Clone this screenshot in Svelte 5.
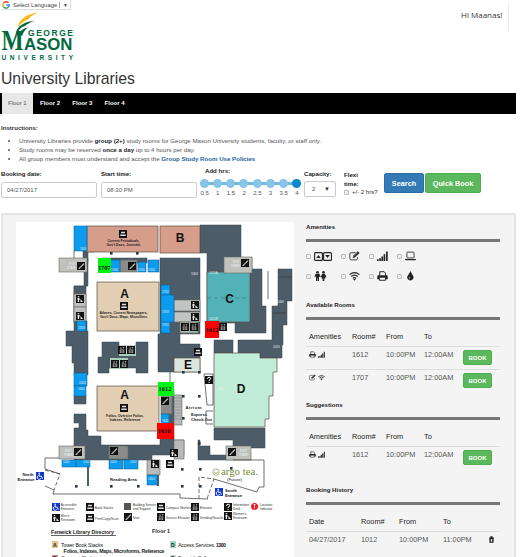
<script>
  const floors = ['Floor 1', 'Floor 2', 'Floor 3', 'Floor 4'];
  const hours = ['0.5', '1', '1.5', '2', '2.5', '3', '3.5', '4'];
  const amenityRows = [
    ['elevator', 'edit', 'signal', 'laptop'],
    ['people', 'wifi', 'print', 'drop']
  ];
  const available = [
    { icons: ['print', 'signal'], room: '1612', from: '10:00PM', to: '12:00AM' },
    { icons: ['edit', 'wifi'], room: '1707', from: '10:00PM', to: '12:00AM' }
  ];
  const suggestions = [{ icons: ['print', 'signal'], room: '1612', from: '10:00PM', to: '12:00AM' }];

  const slate = [
    'M74 286H84V258H88V286H84V323H74Z',
    'M74 286H86V321H87V331H88V375H74V363H72V346H66V331H74Z',
    'M74 395H86V404H74Z',
    'M74 414H86V430H88V436H101V445H160V438H163V390H174V440H184V455H152V460H74V428H79V423H74Z',
    'M102 342H119V346H136V342H148V373H136V368H109V373H98V357H102Z',
    'M102 258H147V263H102Z',
    'M160 258H200V334H180V344H200V372H158V334H160Z',
    'M200 225H241V258H252V269H262V306H266V333H235V323H207V253H200Z',
    'M278 269H292V301H287V325H283V345H282V358H260V353H238V340H272V306H278Z',
    'M214 340H233V353H214Z',
    'M214 428H265V448H233V440H214Z',
    'M198 440H200V446H210V455H233V460H198Z',
    'M83 248H94V252H88V263H83Z'
  ];
  const blues = [
    [74, 226, 13, 25], [77, 321, 9, 10], [74, 373, 13, 13], [74, 386, 12, 10],
    [110, 260, 10, 12], [138, 262, 8, 10], [148, 260, 11, 12],
    [161, 285, 9, 48], [161, 295, 13, 27], [161, 414, 8, 10],
    [62, 460, 14, 7], [76, 460, 14, 7], [109, 460, 14, 9], [124, 460, 14, 9], [147, 475, 11, 10]
  ];
  const grays = [
    [59, 258, 28, 14, '#c0c0bd'], [120, 260, 17, 12, '#8b8b89'], [74, 294, 12, 13, '#bfc0c0'],
    [74, 307, 12, 14, '#bfc0c0'], [174, 300, 26, 11, '#c2c3c3'], [174, 312, 26, 10, '#c2c3c3'],
    [180, 322, 18, 11, '#a7b9ac'], [224, 257, 28, 16, '#c0c0bd'], [59, 446, 26, 13, '#c0c0bd'],
    [109, 446, 19, 13, '#8b8b89'], [161, 395, 11, 19, '#8b8b89'], [174, 395, 8, 30, '#b5b6b8'],
    [174, 440, 10, 19, '#b8b9ba'], [226, 446, 25, 14, '#c0c0bd'], [147, 460, 13, 15, '#b8b9ba']
  ];
  const blacks = [
    [119, 230, 'b'], [77, 262, 's'], [128, 262, 's'], [76, 295, 'p'], [76, 312, 'p'],
    [120, 302, 'b'], [191, 301, 'p'], [191, 313, 'p'], [181, 323, 'e'], [190, 323, 'e'],
    [219, 323, 'e'], [241, 259, 's'], [118, 346, 'e'], [127, 346, 'e'], [111, 360, 'e'],
    [120, 360, 'e'], [194, 348, 'b'], [205, 376, 'q'], [161, 397, 's'], [170, 449, 'p'],
    [151, 460, 'p'], [166, 460, 'b'], [120, 404, 'b'], [74, 448, 's'], [110, 447, 's'], [228, 448, 's']
  ];
  const dots = [[75, 485], [110, 485], [137, 485], [181, 485], [199, 485], [181, 468], [199, 468],
    [230, 467], [182, 395], [198, 395], [182, 417], [110, 252], [136, 252], [182, 371], [198, 371], [198, 442]];
  const legend = [
    [52, 503, 'Accessible', 'Entrance', 'a'], [86, 503, 'Book Stacks', '', 'b'], [124, 503, 'Building Service', 'and Support', 'g'],
    [157, 503, 'Compact Shelving', '', 'b'], [191, 503, 'Elevator', '', 'e'], [224, 503, 'Information', 'Desk', 'q'],
    [251, 503, 'Location', 'Indicator', 'r'], [52, 514, "Men's", 'Restroom', 'p'], [86, 514, 'Print/Copy/Scan', '', 'b'],
    [124, 513, 'Stair', '', 's'], [157, 513, 'Service Elevator', '', 'e'], [191, 513, 'Vending/Snacks', '', 'e'], [224, 512, "Women's", 'Restroom', 'p']
  ];
  const blueLabels = [[80, 250, '1101'], [78, 329, '1319'], [79, 384, '1003'], [78, 390, '1005'], [111, 271, '1706'], [138, 271, '1705'],
    [148, 271, '1704'], [162, 293, '1702'], [162, 313, '1703'], [162, 326, '1701'], [162, 422, '1611'], [63, 463, '1201'], [83, 463, '1202'], [110, 463, '1203'], [130, 463, '1202'],
    [148, 480, '1204'], [191, 275, '1003'], [209, 274, '1010A'], [209, 320, '1010B'], [277, 303, '1009'], [217, 390, '1300'], [273, 348, '1020']];
</script>

{#snippet icon(name)}
  <svg class="icon {name}" viewBox={name === 'elevator' ? '0 0 36 18' : name === 'people' ? '0 0 24 20' : '0 0 20 18'}>
    {#if name === 'elevator'}
      <rect x="1.2" y="1.2" width="15.6" height="15.6" rx="2" fill="none" stroke="currentColor" stroke-width="2.3" />
      <rect x="19.2" y="1.2" width="15.6" height="15.6" rx="2" fill="none" stroke="currentColor" stroke-width="2.3" />
      <path d="M4.500 12L9 6l4.500 6zM22.500 6L27 12l4.500-6z" fill="currentColor" />
    {:else if name === 'edit'}
      <path d="M12 3H4Q1.500 3 1.500 5.500v8Q1.500 16 4 16h9Q15.500 16 15.500 13.500V11" fill="none" stroke="currentColor" stroke-width="1.500" />
      <path d="M7.500 8.500L16 .3l3.200 3.200-8.400 8.300-4 1z" fill="currentColor" />
      <path d="M8.200 9.500l2 2M9.500 9l6-6" stroke="#f5f5f5" stroke-width=".8" />
    {:else if name === 'signal'}
      <path d="M0 15h3v3H0zM4 13h3v5H4zM8 10h3v8H8zM12 6h3v12h-3zM16.500 1h3v17h-3z" fill="currentColor" />
    {:else if name === 'laptop'}
      <rect x="3.500" y="2" width="13" height="10.500" rx="1" fill="none" stroke="currentColor" stroke-width="1.500" />
      <path d="M0 14.300h20v1q0 1.200-2 1.200H2q-2 0-2-1.200z" fill="currentColor" />
    {:else if name === 'people'}
      <circle cx="6" cy="2.500" r="2.500" fill="currentColor" /><circle cx="18" cy="2.500" r="2.500" fill="currentColor" />
      <path d="M2 5.500h8L12 12h-2.200L9 9v11H6.500v-6h-1v6H3V9l-.8 3H0zM15.500 5.500h5L24 12l-2 1-1.500-2.500L22 15h-2.300v5h-3.400v-5H14l1.500-4.500L14 13l-2-1z" fill="currentColor" />
    {:else if name === 'wifi'}
      <path d="M1 6.500Q10-.5 19 6.500M4 10q6-5 12 0M7 13.200q3-2.600 6 0" fill="none" stroke="currentColor" stroke-width="2.200" />
      <path d="M7.800 14.800L10 17.500l2.200-2.700Q10 13.300 7.800 14.800z" fill="currentColor" />
    {:else if name === 'print'}
      <path d="M5 8V1.200h8L15.500 4v4" fill="none" stroke="currentColor" stroke-width="1.800" />
      <path d="M2.500 7.500h15q2 0 2 2V15H16v-3H4v3H.5V9.500q0-2 2-2z" fill="currentColor" />
      <path d="M4.500 12v4.800h11V12" fill="none" stroke="currentColor" stroke-width="1.700" />
    {:else if name === 'drop'}
      <path d="M10 0Q11 3 14 7.500a5.600 5.600 0 1 1-8.500 0Q9 3 10 0z" fill="currentColor" />
      <path d="M8 10.500q2 2.500 0 3.700-2-.8 0-3.700z" fill="#f5f5f5" />
    {:else if name === 'trash'}
      <path d="M3 3h14v3H3zM7 0h6v3H7zM4 6h12v12H4z" fill="currentColor" /><path d="M10 8v7" stroke="#f5f5f5" stroke-width="4" />
    {/if}
  </svg>
{/snippet}

{#snippet glyph(x, y, kind)}
  <g transform="translate({x} {y})">
    {#if kind === 'r'}
      <circle cx="3.500" cy="3.500" r="3.500" fill="#ed1c24" /><path d="M2.500 1.500h2M3.500 1.500v4" stroke="#fff" stroke-width=".8" />
    {:else if kind === 'g'}
      <rect width="7" height="7" fill="#555" />
    {:else}
      <rect width="8" height="8" fill={kind === 'a' ? '#1238c8' : '#121212'} />
      {#if kind === 's'}<path d="M1.500 6.500h1.300V5.200h1.300V3.900h1.300V2.600h1.300V1.300" fill="none" stroke="#ddd" stroke-width=".9" />
      {:else if kind === 'a'}<circle cx="3.200" cy="1.300" r=".8" fill="#fff" /><path d="M3.200 2v2.200h2.300l1 2.400M2.500 3.500a2 2 0 1 0 2.600 2.600" fill="none" stroke="#fff" stroke-width=".9" />
      {:else if kind === 'p'}<circle cx="2.500" cy="1.800" r=".8" fill="#eee" /><path d="M1.500 3h2v2h-.4v2H1.800V5h-.3zM4.500 4l2.500 3H4.500z" fill="#eee" />
      {:else if kind === 'e'}<path d="M1.800 3.500h4.400v3.300H1.800zM2 2.500L3 1l1 1.500zM4.500 1.200h2L5.500 2.700z" fill="#bbb" /><path d="M4 3.500V7M1.800 5h4.400" stroke="#121212" stroke-width=".7" />
      {:else if kind === 'b'}<path d="M2 1.700h4v1.600H2zM1.300 4.500h5.400v1.600H1.300z" fill="#ddd" />
      {:else}<path d="M2.500 2.800q0-1.600 1.600-1.600 1.600 0 1.600 1.400 0 1-1.600 1.600v.8M4.100 6v1" fill="none" stroke="#fff" stroke-width="1" />{/if}
    {/if}
  </g>
{/snippet}

{#snippet roomTable(rows)}
  <div class="table">
    <div class="tr head"><span>Amenities</span><span>Room#</span><span>From</span><span>To</span></div>
    {#each rows as r}
      <div class="tr">
        <span class="icons">{#each r.icons as i}{@render icon(i)}{/each}</span>
        <span>{r.room}</span><span>{r.from}</span><span>{r.to}</span>
        <button class="book">BOOK</button>
      </div>
    {/each}
  </div>
{/snippet}

<div class="page">
  <header>
    <div class="brand">
      <div class="translate">
        <svg viewBox="0 0 16 16" width="8" height="8" fill="none" stroke-width="3">
          <path d="M13 3.500A6.300 6.300 0 0 0 2.700 4.800" stroke="#ea4335" /><path d="M2.700 4.800a6.300 6.300 0 0 0 0 6.400" stroke="#fbbc05" />
          <path d="M2.700 11.200A6.300 6.300 0 0 0 12.500 12.500" stroke="#34a853" /><path d="M12.500 12.500Q14.300 11 14.300 8H8.500" stroke="#4285f4" />
        </svg>
        <span>Select Language</span><i></i><b>▼</b>
      </div>
      <svg class="logo" viewBox="0 11 76 51" width="76" height="51">
        <path d="M17.500 28Q20 15 38 12.500Q31 15.500 28 19.500Q22 21.500 17.500 28Z" fill="#fdb913" />
        <path d="M16 33Q18 22.500 35 20.500Q28 23 25 26Q20 27 17.500 33ZM19 34Q21 28.500 28 27.500Q24 30 22 36Z" fill="#00693e" />
        <text x="28" y="36" font-size="8.500" textLength="45">GEORGE</text>
        <text x="1.500" y="50.300" font-family="Liberation Serif" font-size="29" textLength="22" lengthAdjust="spacingAndGlyphs">M</text>
        <text x="24" y="50.300" font-size="17" textLength="48.500" lengthAdjust="spacingAndGlyphs">ASON</text>
        <text x="1.500" y="59.500" font-size="6.500" textLength="71.500">UNIVERSITY</text>
      </svg>
      <h1>University Libraries</h1>
    </div>
    <div class="hello">Hi Maanas!</div>
  </header>

  <nav>{#each floors as f, i}<a class:active={i === 0}>{f}</a>{/each}</nav>

  <section class="instructions">
    <h2>Instructions:</h2>
    <ul>
      <li>University Libraries provide <b>group (2+)</b> study rooms for George Mason University students, faculty, or staff only.</li>
      <li>Study rooms may be reserved <b>once a day</b> up to 4 hours per day.</li>
      <li>All group members must understand and accept the <b class="link">Group Study Room Use Policies</b></li>
    </ul>
  </section>

  <form>
    <label class="field"><b>Booking date:</b><span class="input">04/27/2017</span></label>
    <label class="field second"><b>Start time:</b><span class="input">08:30 PM</span></label>
    <div class="slider">
      <b>Add hrs:</b>
      <div class="track">{#each hours as h, i}<span class:last={i === 7}></span>{/each}</div>
      <div class="ticks">{#each hours as h}<span>{h}</span>{/each}</div>
    </div>
    <label class="capacity"><b>Capacity:</b><span class="input">2 <em>▼</em></span></label>
    <div class="flexi"><b>Flexi<br />time:</b><span><i class="check"></i>+/- 2 hrs?</span></div>
    <button type="button" class="search">Search</button>
    <button type="button" class="quick">Quick Book</button>
  </form>

  <main>
    <svg class="map" viewBox="16 222 278 335" width="278" height="335">
      <rect x="16" y="222" width="278" height="335" fill="#fff" />
      {#each slate as d}<path {d} fill="#4c5d69" stroke="#39464f" stroke-width=".5" />{/each}
      <g stroke="#5b4c43" stroke-width=".7">
        <rect x="87" y="226" width="71" height="26" fill="#d69e8a" />
        <rect x="160" y="226" width="40" height="27" fill="#d69e8a" />
        <rect x="97" y="282" width="62" height="49" fill="#e2ceb3" />
        <rect x="97" y="386" width="62" height="45" fill="#e2ceb3" />
        <rect x="207" y="272" width="43" height="50" fill="#52b2b8" />
        <path d="M214 353H260V358H277V372H273V396H269V419H265V427H214Z" fill="#c0edd7" />
        <rect x="174" y="358" width="26" height="14" fill="#dce6df" />
      </g>
      <path d="M207 298H250" stroke="#377b80" stroke-dasharray="4 3" stroke-width=".7" />
      <path d="M119 346h17v10h-17zM110 358h18v11h-18z" fill="#a9d0b9" />
      {#each grays as g}<rect x={g[0]} y={g[1]} width={g[2]} height={g[3]} fill={g[4]} stroke="#67675f" stroke-width=".6" />{/each}
      {#each blues as b}<rect x={b[0]} y={b[1]} width={b[2]} height={b[3]} fill="#0b9cf0" stroke="#135784" stroke-width=".5" />{/each}
      <path d="M174 398h8m-8 3h8m-8 3h8m-8 3h8m-8 3h8m-8 3h8m-8 3h8m-8 3h8" stroke="#888" stroke-width=".6" />
      <g fill="none" stroke="#333" stroke-width=".7">
        <path d="M74 251V258M59 458H45V469L60 474M45 486L54 490L53 494H180V498L208 499" />
        <path d="M45 470L60 474L54 490M199 499V477L214 479L207 499" stroke-dasharray="4 2" />
        <path d="M214 479L257 492L259 487H264V460H233M268 271V299M279 277H291M273 313H286M204 374H213V405H207L204 374M213 411H206V424H213M170 372V384" />
      </g>
      <path d="M88 467V486M158 475V486" stroke="#4c5d69" stroke-width="2" />
      {#each dots as d}<rect x={d[0]} y={d[1]} width="2.600" height="2.600" fill="#263745" />{/each}
      {#each blacks as b}{@render glyph(b[0], b[1], b[2])}{/each}
      {@render glyph(36, 472, 'a')}{@render glyph(215, 488, 'a')}
      <rect x="98" y="258" width="13" height="15" fill="#00f515" /><rect x="205" y="321" width="14" height="17" fill="#f00" />
      <rect x="158" y="382" width="16" height="14" fill="#00f515" /><rect x="157" y="423" width="17" height="16" fill="#f00" />
      <g font-family="Liberation Serif" font-size="6.500" font-weight="bold" fill="#111">
        <text x="98" y="270" textLength="12.500">1707</text><text x="205.500" y="331.500" textLength="13">1012</text>
        <text x="158.500" y="391" textLength="13">1612</text><text x="157.500" y="433" textLength="13">1610</text>
      </g>
      <g class="letters" text-anchor="middle">
        <text x="124.500" y="297.500">A</text><text x="124.500" y="399">A</text><text x="180" y="242">B</text><text x="229.500" y="303">C</text><text x="241" y="393">D</text><text x="188" y="369">E</text>
      </g>
      <g class="small" text-anchor="middle">
        <text x="123.500" y="241.500">Current Periodicals,</text><text x="123.500" y="245.500">Gov't Docs, Journals</text>
        <text x="123.500" y="314">Atlases, Current Newspapers,</text><text x="123.500" y="318">Gov't Docs, Maps, Microfilms</text>
        <text x="125" y="416.500">Folios, Oversize Folios,</text><text x="125" y="420.500">Indexes, Reference</text>
      </g>
      <g class="tiny">{#each blueLabels as l}<text x={l[0]} y={l[1]}>{l[2]}</text>{/each}<text x="69" y="265">EXIT</text><text x="67" y="269">STAIR</text><text x="233" y="263">EXIT</text><text x="231" y="267">STAIR</text><text x="65" y="452">EXIT</text><text x="64" y="456">STAIR</text><text x="240" y="452">EXIT</text><text x="239" y="456">STAIR</text></g>
      <g class="places">
        <text x="22.500" y="476">North</text><text x="17.500" y="481" textLength="17">Entrance</text>
        <text x="110" y="480.500">Reading Area</text><text x="185.500" y="408.500" textLength="16">Atrium</text>
        <text x="191" y="416" textLength="16">Express</text><text x="191" y="421" textLength="21">Check-Out</text>
        <text x="225" y="491.500">South</text><text x="225" y="496.500" textLength="17">Entrance</text><text x="227" y="480.500" font-weight="400">(Future)</text>
      </g>
      <circle cx="216" cy="472" r="3.200" fill="none" stroke="#809448" stroke-width=".7" /><path d="M214 472q2 3 4 0" fill="none" stroke="#809448" stroke-width=".7" />
      <text x="221" y="475" font-family="Liberation Serif" font-size="10.500" fill="#748b35" textLength="37" lengthAdjust="spacingAndGlyphs">argo tea.</text>
      <g class="legend">
        {#each legend as l}{@render glyph(l[0], l[1], l[4])}<text x={l[0] + 8.800} y={l[1] + (l[3] ? 3 : 5.500)}>{l[2]}</text>{#if l[3]}<text x={l[0] + 8.800} y={l[1] + 7}>{l[3]}</text>{/if}{/each}
      </g>
      <g class="directory">
        <text x="51" y="533.500" textLength="63">Fenwick Library Directory</text><path d="M51 535.500H116" stroke="#222" stroke-width=".7" />
        <text x="152" y="533" textLength="18">Floor 1</text>
        <rect x="52" y="541" width="6" height="7" fill="#e3c28d" /><text x="53" y="547">A</text>
        <rect x="170" y="541" width="6" height="7" fill="#a3dcc0" /><text x="171" y="547">D</text>
        <text class="regular" x="61" y="547" textLength="42">Tower Book Stacks</text><text x="63.500" y="552.500" textLength="101">Folios, Indexes, Maps, Microforms, Reference</text>
        <text class="regular" x="178" y="547" textLength="36">Access Services</text><text x="216" y="547" textLength="10">1300</text>
        <rect x="52" y="555" width="6" height="3" fill="#c88" /><text x="53" y="559.500">B</text><text class="regular" x="61" y="559.500" textLength="39">Compact Shelving</text>
        <rect x="170" y="555" width="6" height="3" fill="#ced9cf" /><text x="171" y="559.500">E</text><text class="regular" x="178" y="559.500" textLength="35">Fenwick Gallery</text>
      </g>
    </svg>

    <aside>
      <h3>Amenities</h3>
      <div class="amenities">
        {#each amenityRows as row}<div class="amenity-row">{#each row as name}<span><i class="check"></i>{@render icon(name)}</span>{/each}</div>{/each}
      </div>
      <h3>Available Rooms</h3>
      {@render roomTable(available)}
      <h3 class="suggest">Suggestions</h3>
      {@render roomTable(suggestions)}
      <h3 class="history-title">Booking History</h3>
      <div class="table history">
        <div class="tr head"><span>Date</span><span>Room#</span><span>From</span><span>To</span></div>
        <div class="tr"><span>04/27/2017</span><span>1012</span><span>10:00PM</span><span>11:00PM</span>{@render icon('trash')}</div>
      </div>
    </aside>
  </main>
</div>

<style>
  :global(body) { background: #fff; overflow: hidden; }
  * { box-sizing: border-box; }
  .page { width: 516px; height: 557px; overflow: hidden; font: 6px/8px "Liberation Sans", Arial, sans-serif; color: #333; }
  header { display: flex; justify-content: space-between; height: 93px; }
  .translate { display: flex; align-items: center; width: 69px; height: 10px; margin-left: 2px; border: solid #ddd; border-width: 0 1px 1px 0; font-size: 6px; color: #444; }
  .translate svg { margin-right: 3px; }
  .translate span { width: 44px; font-size: 5.900px; white-space: nowrap; }
  .translate i { width: 1px; height: 6px; margin: 0 3px 0 2px; background: #aaa; }
  .translate b { font-size: 5px; }
  .logo { display: block; margin-top: 1px; fill: #00693e; font-family: "Liberation Sans", Arial, sans-serif; font-weight: bold; }
  h1 { margin: 7px 0 0 1px; font: 400 15.750px/20px "Liberation Sans", Arial, sans-serif; white-space: nowrap; }
  .hello { width: 48px; height: 27px; margin: 4px 7px 0 0; padding-top: 6px; border-right: 1px solid #e7e7e7; font: 8px/10px "Open Sans", sans-serif; white-space: nowrap; }
  nav { display: flex; height: 21px; padding-left: 2px; background: #000; }
  nav a { width: 32.300px; padding-left: 6px; font: bold 6px/20px "Liberation Sans", sans-serif; color: #fff; }
  nav .active { width: 31px; margin-right: 1px; background: #e7e7e7; color: #555; font-weight: 400; }
  .instructions { height: 56px; padding: 9px 1px 0; }
  h2 { margin: 0; font-size: 6.100px; line-height: 9px; }
  ul { margin: 5px 0 0; padding-left: 18px; }
  li { font-size: 6.130px; line-height: 8.800px; white-space: nowrap; color: #555; }
  li b { color: #222; }
  li .link { color: #235f9d; }
  form { display: flex; height: 43px; padding-left: 1px; }
  form b { color: #222; font-size: 6.100px; }
  .field { display: flex; flex-direction: column; width: 96px; margin-right: 4px; }
  .field.second { margin-right: 3px; }
  .input { height: 16px; padding: 0 5px; border: 1px solid #ccc; border-radius: 2px; line-height: 15px; color: #555; background: #fff; }
  .field .input { margin-top: 3.500px; }
  .slider { width: 102px; margin-top: -3px; }
  .slider b { display: block; margin-left: 5px; }
  .track { display: flex; justify-content: space-between; height: 9px; margin: 4px 1px 0 0; background: linear-gradient(transparent 3px, #6eb9df 3px 6px, transparent 6px); }
  .track span { width: 9px; height: 9px; border-radius: 50%; background: #89c5e6; }
  .track .last { background: #0b87cb; }
  .ticks { display: flex; margin: 1px -2px 0 -2px; }
  .ticks span { width: 13.200px; text-align: center; color: #555; }
  .capacity { width: 32px; margin-left: 2px; }
  .capacity b, .capacity .input { display: block; white-space: nowrap; }
  .capacity .input { margin-top: 3px; padding-left: 7px; }
  .capacity em { margin-left: 7px; font-style: normal; color: #333; }
  .flexi { width: 38px; margin: 0 0 0 8px; }
  .flexi b { display: block; line-height: 9px; }
  .flexi span { display: flex; align-items: center; height: 8px; white-space: nowrap; }
  .check { display: inline-block; flex: none; width: 5px; height: 5px; margin-right: 3px; border: 1px solid #bbb; border-radius: 1px; background: #eee; }
  button { height: 20px; margin: 3px 0 0; padding: 0; border: 1px solid #2e6da4; border-radius: 2px; background: #337ab7; color: #fff; font: bold 7.300px/17px "Liberation Sans", sans-serif; }
  .search { width: 40px; margin-left: 2px; }
  .quick { width: 56px; margin-left: 1px; background: #5cb85c; border-color: #4cae4c; }
  main { display: flex; height: 360px; padding: 8px 0 0 14px; border: 1px solid #e5e5e5; border-width: 2px 2px 0; margin-left: 1px; border-radius: 2px; background: #f4f4f4; }
  .map { flex: none; margin-top: -1px; margin-left: -1px; font-family: "Liberation Sans", sans-serif; }
  .letters { font-size: 12px; font-weight: bold; fill: #111; }
  .small { font-size: 3.400px; font-weight: bold; fill: #222; }
  .tiny { font-size: 3px; fill: #e8f2f6; }
  .places { font-size: 4.200px; font-weight: bold; fill: #222; }
  .legend { font-size: 3.300px; fill: #333; }
  .directory { font-size: 5.200px; font-weight: bold; fill: #222; }
  .directory .regular { font-weight: 400; }
  aside { width: 194px; margin-left: 12px; }
  h3 { margin: 0; height: 19px; border-bottom: 3px solid #777; font-size: 6.100px; line-height: 7px; color: #222; }
  .amenities { height: 59px; padding-top: 7px; }
  .amenity-row { display: flex; height: 20px; }
  .amenity-row span { display: flex; align-items: center; width: 28px; height: 14px; }
  .amenity-row span:first-child { width: 35px; }
  .icon { flex: none; width: 11px; height: 10px; overflow: visible; color: #222; }
  .icon.elevator { width: 18px; height: 9px; }
  .icon.people { width: 13px; height: 10px; }
  .table { padding-top: 13px; color: #555; font-size: 7.300px; }
  .tr { display: grid; grid-template-columns: 43px 34px 38px 38px 29px; height: 23px; padding: 4px 0 0 3px; border-top: 1px solid #ddd; line-height: 8px; }
  .tr.head { height: 13px; padding-top: 0; border: 0; color: #222; }
  .tr .icons { display: flex; gap: 2px; }
  .tr .icon { width: 7px; height: 7px; }
  .book { width: 29px; height: 15px; margin: -1px 0 0 1px; border-color: #4cae4c; background: #5cb85c; font: bold 6px/12px "Liberation Sans", sans-serif; }
  .suggest { margin-top: 9px; }
  .history-title { margin-top: 17px; }
  .history .tr { grid-template-columns: 52px 38px 44px 45px 8px; }
</style>
